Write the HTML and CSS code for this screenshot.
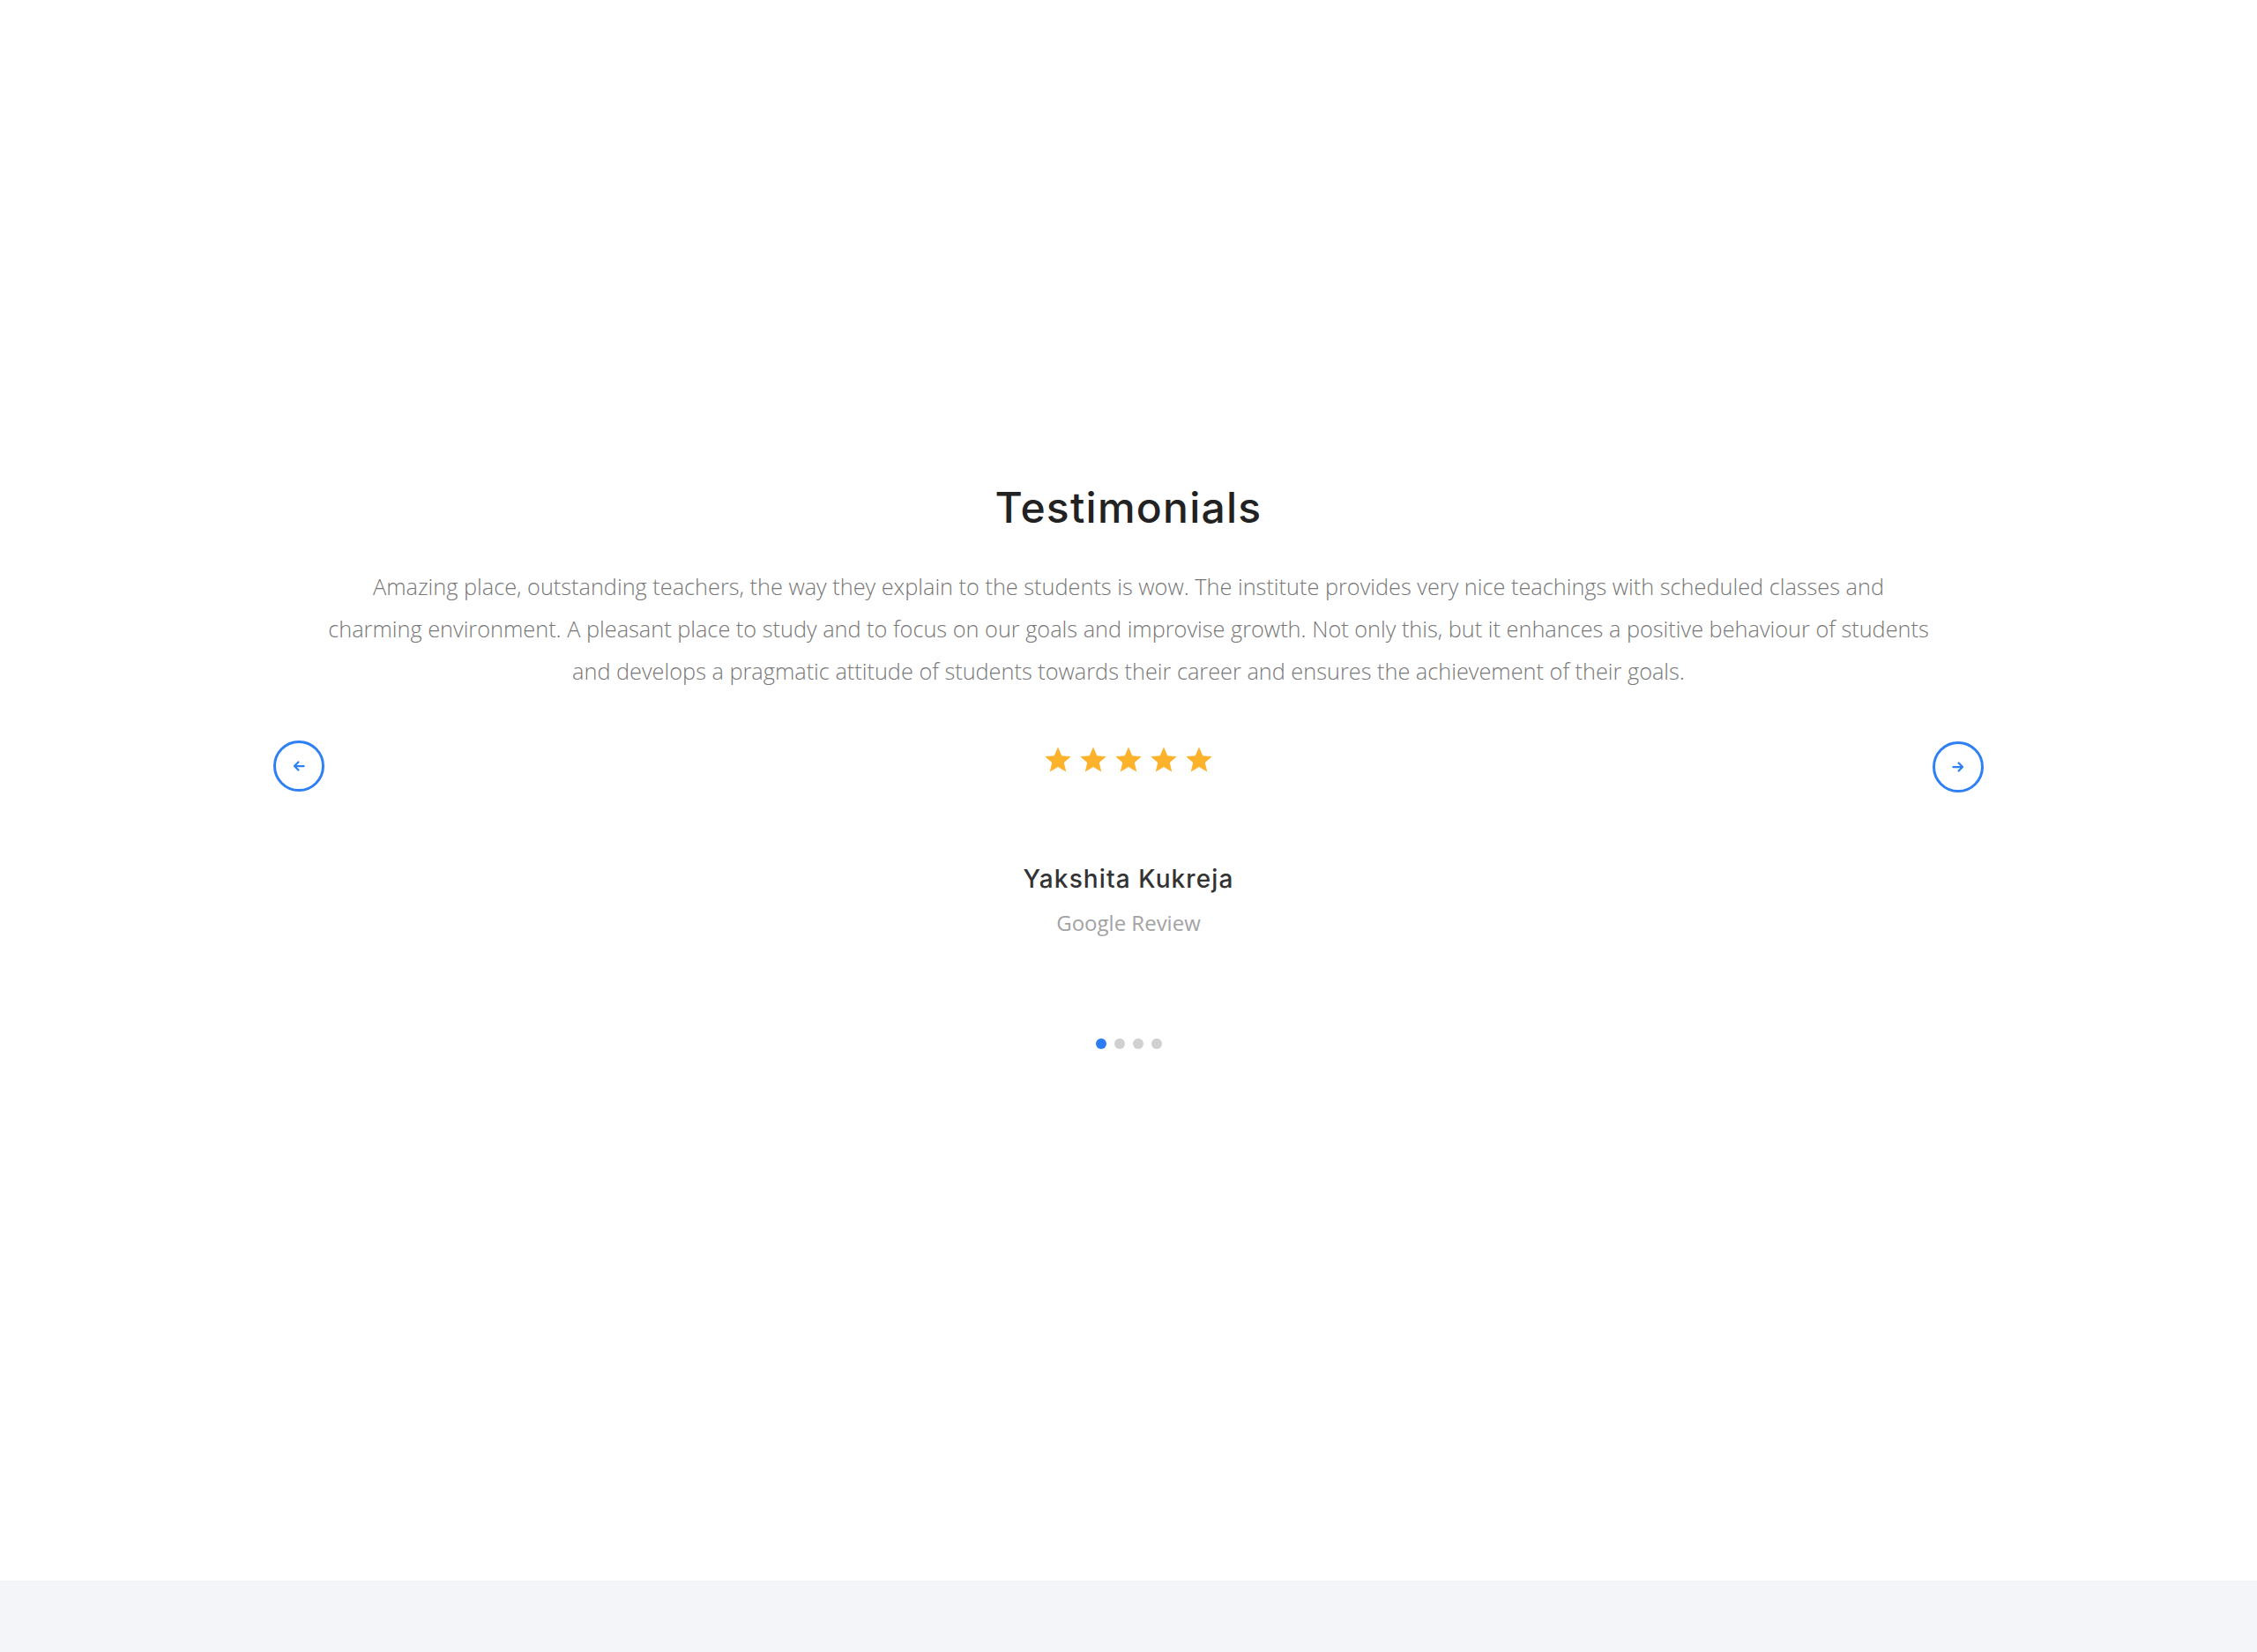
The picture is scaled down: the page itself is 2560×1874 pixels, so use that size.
FILE: index.html
```html
<!DOCTYPE html>
<html>
<head>
  <title>Testimonials</title>
  <link rel="stylesheet" href="styles.css">
</head>
<body>
  <section class="testimonials">
    <h2 class="section-title">Testimonials</h2>

    <div class="testimonial-slider">
      <p class="testimonial-text">Amazing place, outstanding teachers, the way they explain to the students is wow. The institute provides very nice teachings with scheduled classes and charming environment. A pleasant place to study and to focus on our goals and improvise growth. Not only this, but it enhances a positive behaviour of students and develops a pragmatic attitude of students towards their career and ensures the achievement of their goals.</p>

      <button class="slider-arrow prev" aria-label="Previous">
        <svg viewBox="0 0 16 16" width="18" height="18"><path d="M13 8H3.5M7.5 4L3.5 8l4 4"/></svg>
      </button>

      <div class="rating">
        <svg viewBox="0 0 24 24"><path d="M12 1.8l3 6.9 7.4.6-5.6 4.9 1.7 7.3L12 17.6l-6.5 3.9 1.7-7.3-5.6-4.9 7.4-.6z"/></svg>
        <svg viewBox="0 0 24 24"><path d="M12 1.8l3 6.9 7.4.6-5.6 4.9 1.7 7.3L12 17.6l-6.5 3.9 1.7-7.3-5.6-4.9 7.4-.6z"/></svg>
        <svg viewBox="0 0 24 24"><path d="M12 1.8l3 6.9 7.4.6-5.6 4.9 1.7 7.3L12 17.6l-6.5 3.9 1.7-7.3-5.6-4.9 7.4-.6z"/></svg>
        <svg viewBox="0 0 24 24"><path d="M12 1.8l3 6.9 7.4.6-5.6 4.9 1.7 7.3L12 17.6l-6.5 3.9 1.7-7.3-5.6-4.9 7.4-.6z"/></svg>
        <svg viewBox="0 0 24 24"><path d="M12 1.8l3 6.9 7.4.6-5.6 4.9 1.7 7.3L12 17.6l-6.5 3.9 1.7-7.3-5.6-4.9 7.4-.6z"/></svg>
      </div>

      <button class="slider-arrow next" aria-label="Next">
        <svg viewBox="0 0 16 16" width="18" height="18"><path d="M3 8h9.5M8.5 4l4 4-4 4"/></svg>
      </button>

      <div class="author">
        <h4 class="author-name">Yakshita Kukreja</h4>
        <span class="author-source">Google Review</span>
      </div>
    </div>

    <div class="slider-dots">
      <span class="dot active"></span>
      <span class="dot"></span>
      <span class="dot"></span>
      <span class="dot"></span>
    </div>
  </section>

  <footer class="page-footer"></footer>
</body>
</html>
```

FILE: styles.css
```css
body {
  margin: 0;
  background-color: #fff;
  font-family: "Open Sans", "Liberation Sans", sans-serif;
}

.testimonials {
  padding-top: 547px;
  height: 1246px;
  box-sizing: border-box;
}

.section-title {
  margin: 0;
  text-align: center;
  font-family: "Inter", sans-serif;
  font-weight: 500;
  font-size: 48px;
  line-height: 58px;
  color: #222;
  letter-spacing: 1.25px;
}

.testimonial-slider {
  display: grid;
  grid-template-columns: 58px 1fr 58px;
  width: 1940px;
  margin: 36px auto 0;
}

.testimonial-text {
  grid-column: 1 / 4;
  margin: 0;
  padding: 0 61px;
  text-align: center;
  font-weight: 300;
  font-size: 25.3px;
  line-height: 48px;
  color: #777;
}

.slider-arrow {
  width: 58px;
  height: 58px;
  margin-top: 56px;
  border: 3px solid #2e80f4;
  border-radius: 50%;
  background: #fff;
  display: flex;
  align-items: center;
  justify-content: center;
  padding: 0;
  cursor: pointer;
}

.slider-arrow svg {
  fill: none;
  stroke: #2e80f4;
  stroke-width: 2;
  stroke-linecap: round;
  stroke-linejoin: round;
}

.slider-arrow.prev {
  margin-top: 55px;
}

.rating {
  display: flex;
  justify-content: center;
  gap: 6px;
  margin-top: 60px;
}

.rating svg {
  width: 34px;
  height: 34px;
  fill: #fdb22c;
}

.author {
  grid-column: 1 / 4;
  text-align: center;
  margin-top: 78px;
}

.author-name {
  margin: 0;
  font-family: "Inter", sans-serif;
  font-weight: 500;
  font-size: 28px;
  line-height: 40px;
  color: #333;
  letter-spacing: 1.1px;
}

.author-source {
  display: block;
  margin-top: 12px;
  font-size: 24px;
  line-height: 36px;
  color: #a3a3a3;
}

.slider-dots {
  display: flex;
  justify-content: center;
  gap: 9px;
  margin-top: 113px;
}

.dot {
  width: 12px;
  height: 12px;
  border-radius: 50%;
  background-color: #d0d0d0;
}

.dot.active {
  background-color: #2b7cf5;
}

.page-footer {
  height: 81px;
  margin-top: 547px;
  background-color: #f4f5f9;
}
```
